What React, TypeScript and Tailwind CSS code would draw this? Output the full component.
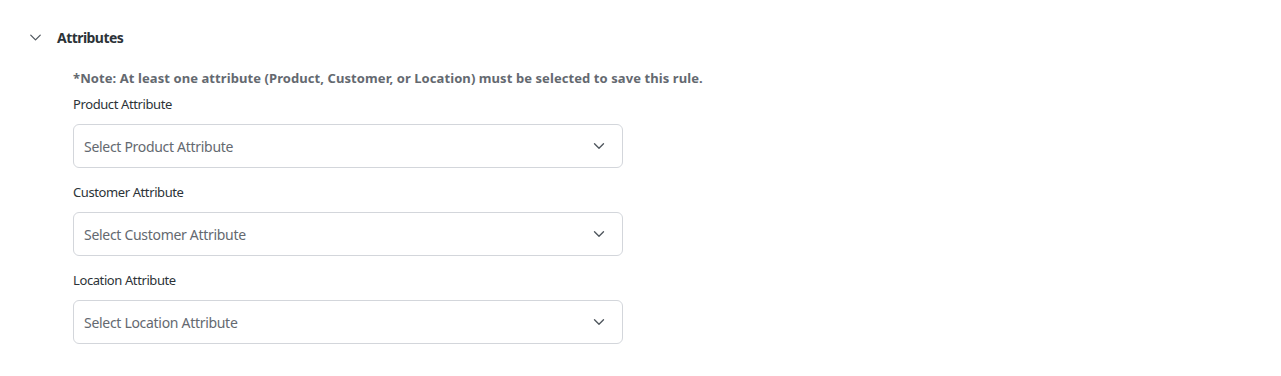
import { ChevronDown } from "lucide-react";

const fields = [
  { label: "Product Attribute", placeholder: "Select Product Attribute" },
  { label: "Customer Attribute", placeholder: "Select Customer Attribute" },
  { label: "Location Attribute", placeholder: "Select Location Attribute" },
];

export default function App() {
  return (
    <main
      className="w-[1281px] h-[376px] bg-white text-[#3c434a]"
      style={{ fontFamily: '"Noto Sans", "Open Sans", sans-serif' }}
    >
      <div className="pt-[27px] pl-[26px]">
        {/* section header */}
        <button className="flex items-center gap-[12px] h-[20px]">
          <ChevronDown className="w-[19px] h-[19px] text-[#50575e]" strokeWidth={1.6} />
          <span className="text-[14px] font-bold text-[#2c3338] tracking-[-0.55px]">Attributes</span>
        </button>

        <div className="pl-[47px] pt-[21px]">
          <p className="text-[13px] font-bold text-[#646970] leading-[20px] tracking-[0.08px]">
            *Note: At least one attribute (Product, Customer, or Location) must be selected to save this rule.
          </p>

          <div className="flex flex-col gap-[14px] mt-[6px]">
            {fields.map((f) => (
              <div key={f.label} className="flex flex-col">
                <label className="text-[13px] leading-[20px] text-[#2c3338] mb-[10px] tracking-[-0.4px]">
                  {f.label}
                </label>
                <div className="w-[550px] h-[44px] border border-[#d3d6db] rounded-[6px] flex items-center justify-between pl-[10px] pr-[14px] bg-white">
                  <span className="text-[14px] text-[#646970] tracking-[-0.3px]">{f.placeholder}</span>
                  <ChevronDown className="w-[18px] h-[18px] text-[#50575e]" strokeWidth={1.8} />
                </div>
              </div>
            ))}
          </div>
        </div>
      </div>
    </main>
  );
}
